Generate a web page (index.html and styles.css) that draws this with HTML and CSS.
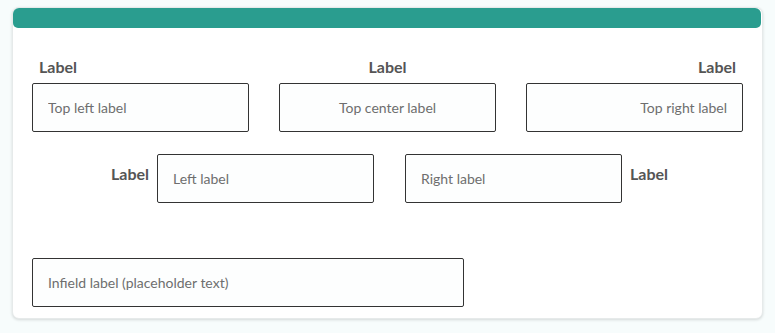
FILE: index.html
```html
<!DOCTYPE html>
<html lang="en">
<head>
<meta charset="utf-8">
<title>Labels</title>
<link rel="stylesheet" href="styles.css">
</head>
<body>
<div class="card">
  <div class="card-header"></div>
  <div class="card-body">
    <div class="row-top">
      <div class="field field-left">
        <label class="label">Label</label>
        <input class="input" type="text" placeholder="Top left label">
      </div>
      <div class="field field-center">
        <label class="label">Label</label>
        <input class="input input-center" type="text" placeholder="Top center label">
      </div>
      <div class="field field-right">
        <label class="label">Label</label>
        <input class="input input-right" type="text" placeholder="Top right label">
      </div>
    </div>
    <div class="row-side">
      <div class="side-field">
        <label class="label side-label">Label</label>
        <input class="input" type="text" placeholder="Left label">
      </div>
      <div class="side-field">
        <input class="input" type="text" placeholder="Right label">
        <label class="label side-label">Label</label>
      </div>
    </div>
    <div class="row-infield">
      <input class="input input-wide" type="text" placeholder="Infield label (placeholder text)">
    </div>
  </div>
</div>
</body>
</html>
```

FILE: styles.css
```css
html, body {
  margin: 0;
  padding: 0;
}

body {
  background: #f7fcfc;
  font-family: Lato, "Noto Sans", sans-serif;
  width: 775px;
  height: 333px;
  overflow: hidden;
}

.card {
  box-sizing: border-box;
  margin: 7px 0 0 12px;
  width: 751px;
  height: 312px;
  background: #ffffff;
  border: 1px solid #e6eaea;
  border-radius: 7px;
  box-shadow: 0 1px 3px rgba(0, 0, 0, 0.14);
}

.card-header {
  height: 20px;
  background: #2a9d8f;
  border-radius: 6px 6px 5px 5px;
  margin-right: 1px;
}

.card-body {
  padding: 30px 0 0 19px;
}

.label {
  display: block;
  font-size: 16px;
  line-height: 18px;
  font-weight: 700;
  color: #555555;
}

.input {
  box-sizing: border-box;
  display: block;
  width: 217px;
  height: 49px;
  margin: 0;
  padding: 0 15px;
  border: 1px solid #333333;
  border-radius: 2px;
  background: #fdfefe;
  font-family: Lato, "Noto Sans", sans-serif;
  font-size: 14px;
  color: #333333;
  outline: none;
}

.input::placeholder {
  color: #6e6e6e;
  opacity: 1;
}

.input-center {
  text-align: center;
}

.input-right {
  text-align: right;
}

.row-top {
  display: grid;
  grid-template-columns: 217px 217px 217px;
  column-gap: 30px;
}

.field .label {
  margin-bottom: 7px;
  padding: 0 7px;
}

.field-center .label {
  text-align: center;
}

.field-right .label {
  text-align: right;
}

.row-side {
  display: flex;
  justify-content: center;
  column-gap: 31px;
  width: 711px;
  margin: 22px 0 0 2px;
}

.side-field {
  display: flex;
  align-items: flex-start;
  column-gap: 8px;
}

.side-label {
  padding-top: 11px;
}

.row-infield {
  margin-top: 55px;
}

.input-wide {
  width: 432px;
}
```
